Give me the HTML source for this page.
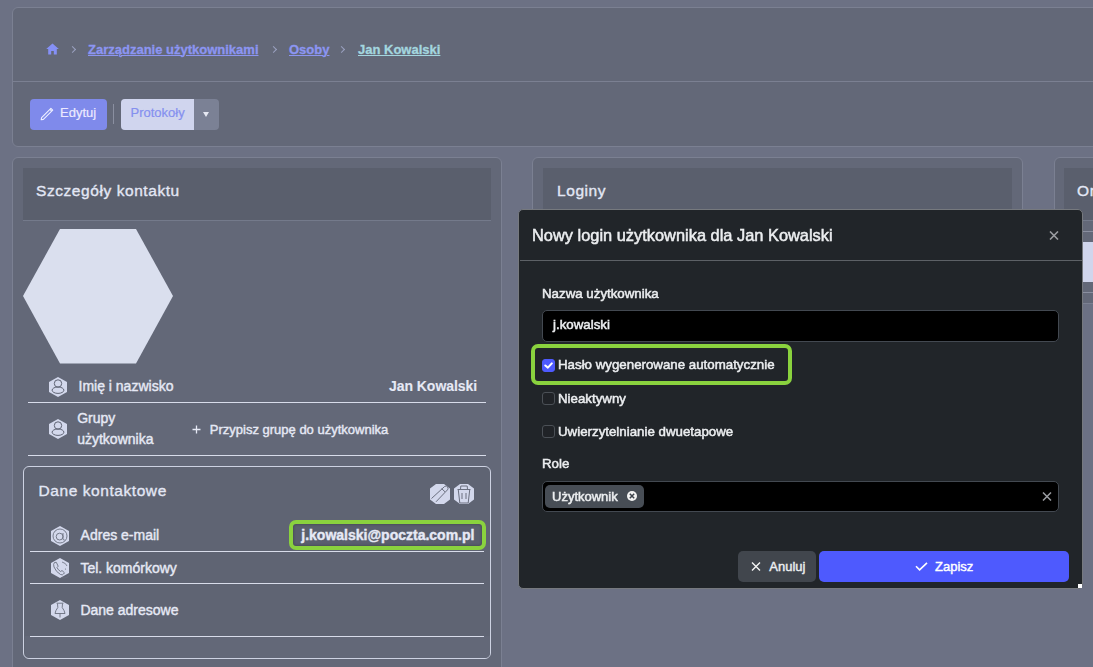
<!DOCTYPE html>
<html><head><meta charset="utf-8">
<style>
*{box-sizing:border-box;margin:0;padding:0}
html,body{width:1093px;height:667px;overflow:hidden}
body{background:#6c7184;font-family:"Liberation Sans",sans-serif;position:relative;color:#e3e6f2}
.a{position:absolute}
.t{position:absolute;white-space:nowrap;line-height:1;-webkit-text-stroke:0.4px currentColor}
.panel{position:absolute;background:#636878;border:1px solid #7b8092;border-radius:6px}
.hline{position:absolute;height:1px;background:#7b8092}
.crumb{color:#8c95f2;font-weight:700;font-size:13px;text-decoration:underline;text-underline-offset:1px;text-decoration-thickness:1px;-webkit-text-stroke:0.3px currentColor !important}
.chev{position:absolute;width:5px;height:5px;border-right:1.2px solid #9aa0c0;border-top:1.2px solid #9aa0c0;transform:rotate(45deg)}
.cardh{position:absolute;background:#5a5f6d;border-bottom:1px solid #747a8b}
.h16{font-size:15.5px;letter-spacing:0.57px;color:#e3e7f5;-webkit-text-stroke:0.35px currentColor !important}
.row{font-size:14px;color:#e6e9f5}
.dl{position:absolute;height:1px;background:#d8dcea}
.modal{position:absolute;left:518px;top:209px;width:565px;height:380px;background:#212529;border:1px solid #76797e;border-radius:5px}
.mt{color:#eceef0;will-change:transform;-webkit-text-stroke:0.5px currentColor}
.cb{position:absolute;width:13px;height:13px;border:1px solid #4b5056;border-radius:3px;background:#202327}
.green{position:absolute;border:4px solid #8ad23e;border-radius:7px}
</style></head>
<body>
<!-- top panel -->
<div class="panel" style="left:12px;top:7px;width:1100px;height:140px"></div>
<div class="hline" style="left:13px;top:81px;width:1080px"></div>
<!-- home icon -->
<svg class="a" style="left:46px;top:43px" width="13" height="12" viewBox="0 0 13 12"><path d="M6.5 0.5 L12.8 6 L10.8 6 L10.8 11.5 L7.8 11.5 L7.8 8 L5.2 8 L5.2 11.5 L2.2 11.5 L2.2 6 L0.2 6 Z" fill="#8590f5"/></svg>
<div class="chev" style="left:70px;top:47px"></div>
<div class="t crumb" style="left:88px;top:42.5px">Zarządzanie użytkownikami</div>
<div class="chev" style="left:271px;top:47px"></div>
<div class="t crumb" style="left:289px;top:42.5px">Osoby</div>
<div class="chev" style="left:339px;top:47px"></div>
<div class="t crumb" style="left:358px;top:42.5px;color:#a3d6df">Jan Kowalski</div>
<!-- buttons -->
<div class="a" style="left:30px;top:99px;width:77px;height:31px;background:#7f8aeb;border-radius:4px"></div>
<svg class="a" style="left:40px;top:107px" width="14" height="14" viewBox="0 0 14 14"><path d="M1.2 12.8 L1.6 10.6 L9.9 2.3 L11.7 4.1 L3.4 12.4 Z M9.9 2.3 L10.9 1.3 L12.7 3.1 L11.7 4.1" fill="none" stroke="#eef0ff" stroke-width="1.1" stroke-linejoin="round"/></svg>
<div class="t" style="left:60px;top:106.3px;font-size:13px;color:#ece9ff;-webkit-text-stroke:0.2px currentColor">Edytuj</div>
<div class="a" style="left:113px;top:104px;width:1px;height:20px;background:#8a8fa0"></div>
<div class="a" style="left:121px;top:99px;width:98px;height:31px;background:#7b8195;border-radius:4px"></div>
<div class="a" style="left:121px;top:99px;width:73px;height:31px;background:#d0d5ee;border-radius:4px 0 0 4px"></div>
<div class="t" style="left:130.5px;top:106.3px;font-size:13px;color:#8590ee;-webkit-text-stroke:0.2px currentColor">Protokoły</div>
<div class="a" style="left:202.5px;top:111.5px;width:0;height:0;border-left:3.5px solid transparent;border-right:3.5px solid transparent;border-top:5px solid #e6e8f2"></div>

<!-- card 1 -->
<div class="panel" style="left:12px;top:157px;width:490px;height:530px"></div>
<div class="cardh" style="left:23px;top:168px;width:468px;height:53px"></div>
<div class="t h16" style="left:36px;top:182.8px">Szczegóły kontaktu</div>
<svg class="a" style="left:0;top:0" width="200" height="400"><polygon points="23,296 60,229 136,229 173,296 136,363.5 60,363.5" fill="#dadfee"/></svg>


<!-- card1 rows -->
<svg class="a" style="left:49px;top:377px" width="18" height="20" viewBox="0 0 18 20"><polygon points="9,0 18,5 18,15 9,20 0,15 0,5" fill="#d3d8ec"/><circle cx="9" cy="6.5" r="3.7" fill="none" stroke="#5f6474" stroke-width="1"/><ellipse cx="9" cy="13.2" rx="5.9" ry="3.2" fill="none" stroke="#5f6474" stroke-width="1"/></svg>
<div class="t row" style="left:78.5px;top:379.3px">Imię i nazwisko</div>
<div class="t row" style="left:389px;top:379.3px;font-weight:700;-webkit-text-stroke:0.1px currentColor;letter-spacing:-0.05px">Jan Kowalski</div>
<div class="dl" style="left:28px;top:401.5px;width:458px"></div>
<svg class="a" style="left:48.5px;top:419px" width="18" height="20" viewBox="0 0 18 20"><polygon points="9,0 18,5 18,15 9,20 0,15 0,5" fill="#d3d8ec"/><circle cx="9" cy="6.5" r="3.7" fill="none" stroke="#5f6474" stroke-width="1"/><ellipse cx="9" cy="13.2" rx="5.9" ry="3.2" fill="none" stroke="#5f6474" stroke-width="1"/></svg>
<div class="t row" style="left:77.2px;top:410.9px">Grupy</div>
<div class="t row" style="left:77.2px;top:431.5px">użytkownika</div>
<svg class="a" style="left:192px;top:425px" width="9" height="9" viewBox="0 0 9 9"><path d="M0.5 4.5 L8.5 4.5 M4.5 0.5 L4.5 8.5" stroke="#e6e9f5" stroke-width="1.3"/></svg>
<div class="t" style="left:209.8px;top:423px;font-size:13px;color:#e6e9f5">Przypisz grupę do użytkownika</div>
<div class="dl" style="left:28px;top:454.5px;width:458px"></div>

<!-- inner card -->
<div class="a" style="left:23px;top:466px;width:468px;height:193px;border:1.5px solid #cdd2e2;border-radius:6px;background:#5f6473"></div>
<div class="t h16" style="left:38.5px;top:482.7px">Dane kontaktowe</div>
<svg class="a" style="left:430px;top:484px" width="45" height="20" viewBox="0 0 45 20">
<polygon points="6,0 14,0 20,4.5 20,15.5 14,20 6,20 0,15.5 0,4.5" fill="#d3d8ec"/>
<path d="M1.5 14.5 L14.6 2.5 Q16.3 1.2 17.6 2.8 Q18.6 4.4 17.5 5.8 L6 17.8 M11.6 4.6 L15 7.8" fill="none" stroke="#6a6f7f" stroke-width="1"/>
<polygon points="30,0 38,0 44,4.5 44,15.5 38,20 30,20 24,15.5 24,4.5" fill="#d3d8ec"/>
<path d="M27.5 5.5 L40.5 5.5 M30.5 5.5 L30.8 2 L37.2 2 L37.5 5.5 M28.3 6 L29.8 19 L38.2 19 L39.7 6 M32 9 L32 15 M36 9 L36 15" fill="none" stroke="#6a6f7f" stroke-width="1"/>
</svg>
<svg class="a" style="left:51px;top:526px" width="18" height="20" viewBox="0 0 18 20"><polygon points="9,0 18,5 18,15 9,20 0,15 0,5" fill="#d3d8ec"/><circle cx="9" cy="10" r="7" fill="none" stroke="#6a6f7f" stroke-width="0.9"/><circle cx="8.6" cy="10.6" r="3.4" fill="none" stroke="#6a6f7f" stroke-width="0.9"/><path d="M12 7 L12 12.6 Q12 14.2 13.6 14" fill="none" stroke="#6a6f7f" stroke-width="0.9"/></svg>
<div class="t row" style="left:80.6px;top:528.4px">Adres e-mail</div>
<div class="green" style="left:289px;top:519.5px;width:197px;height:30px;background:#5a5f6e;box-shadow:inset 0 0 3px rgba(0,0,0,.35)"></div>
<div class="t row" style="left:301.3px;top:528.2px;font-weight:700">j.kowalski@poczta.com.pl</div>
<div class="dl" style="left:30px;top:550.5px;width:454px"></div>
<svg class="a" style="left:51px;top:558px" width="20" height="22" viewBox="0 0 20 22"><polygon points="9,0 18,5 18,15 9,20 0,15 0,5" fill="#d3d8ec"/><path d="M3.5 4.5 Q2 6 3 9 Q5 14 9.5 16.5 Q11.5 17.5 12.5 16 L13.5 14.8 L11 12.5 L9.6 13.5 Q7 12 6 9.5 L7.2 8.2 L5.3 4.3 Z" fill="none" stroke="#6a6f7f" stroke-width="0.9"/><path d="M11 4 Q15 5 16 8 M10.5 19.5 Q16 21 18.5 17" fill="none" stroke="#6a6f7f" stroke-width="0.8"/><circle cx="14.5" cy="11" r="0.6" fill="#6a6f7f"/></svg>
<div class="t row" style="left:80.4px;top:560.5px">Tel. komórkowy</div>
<div class="dl" style="left:30px;top:582.5px;width:454px"></div>
<svg class="a" style="left:51px;top:600px" width="18" height="20" viewBox="0 0 18 20"><polygon points="9,0 18,5 18,15 9,20 0,15 0,5" fill="#d3d8ec"/><path d="M5.5 3.2 L12.5 3.2 M6.5 3.5 L6.8 7.5 Q4.5 10.5 4 13.5 L14 13.5 Q13.5 10.5 11.2 7.5 L11.5 3.5 M9 13.5 L9 17.5" fill="none" stroke="#6a6f7f" stroke-width="0.9"/></svg>
<div class="t row" style="left:80.4px;top:603.2px">Dane adresowe</div>
<div class="a" style="left:24.5px;top:636px;width:465px;height:21.5px;background:#636878;border-radius:0 0 5px 5px"></div>
<div class="dl" style="left:30px;top:636px;width:454px"></div>

<!-- card 2 -->
<div class="panel" style="left:532px;top:157px;width:491px;height:147px"></div>
<div class="cardh" style="left:543px;top:168px;width:469px;height:53px"></div>
<div class="t h16" style="left:557px;top:182.8px">Loginy</div>
<!-- card 3 -->
<div class="panel" style="left:1054px;top:157px;width:490px;height:147px"></div>
<div class="a" style="left:1064px;top:231px;width:40px;height:1px;background:#8a8fa0"></div>
<div class="a" style="left:1064px;top:242px;width:40px;height:40px;background:#d0d5ec"></div>
<div class="a" style="left:1064px;top:292px;width:40px;height:1px;background:#8a8fa0"></div>
<div class="cardh" style="left:1064px;top:168px;width:469px;height:53px"></div>
<div class="t h16" style="left:1077px;top:182.8px">Organizacje</div>

<!-- modal -->
<div class="modal"></div>
<!-- modal content -->
<div class="t mt" style="left:532px;top:227.2px;font-size:16.4px">Nowy login użytkownika dla Jan Kowalski</div>
<svg class="a" style="left:1049px;top:231px" width="10" height="9" viewBox="0 0 10 9"><path d="M1 0.5 L9 8.5 M9 0.5 L1 8.5" stroke="#9a9ca1" stroke-width="1.6"/></svg>
<div class="a" style="left:520px;top:260px;width:562px;height:1px;background:#5d6166"></div>
<div class="t mt" style="left:542px;top:286.5px;font-size:13.3px">Nazwa użytkownika</div>
<div class="a" style="left:542px;top:310px;width:517px;height:32px;background:#000;border:1px solid #434951;border-radius:5px"></div>
<div class="t mt" style="left:552.6px;top:318.4px;font-size:13.3px">j.kowalski</div>
<div class="green" style="left:531px;top:344px;width:261px;height:41px"></div>
<div class="cb" style="left:542px;top:359px;background:#4e5afe;border-color:#4e5afe"></div>
<svg class="a" style="left:544px;top:361px" width="9" height="9" viewBox="0 0 9 9"><path d="M1.3 4.5 L3.9 6.6 L7.8 2.4" fill="none" stroke="#fff" stroke-width="2" stroke-linecap="round" stroke-linejoin="round"/></svg>
<div class="t mt" style="left:557.6px;top:357.7px;font-size:13.3px">Hasło wygenerowane automatycznie</div>
<div class="cb" style="left:542px;top:392px"></div>
<div class="t mt" style="left:557.6px;top:391.7px;font-size:13.3px">Nieaktywny</div>
<div class="cb" style="left:542px;top:425px"></div>
<div class="t mt" style="left:557.6px;top:424.9px;font-size:13.3px">Uwierzytelnianie dwuetapowe</div>
<div class="t mt" style="left:542px;top:457.2px;font-size:13.3px">Role</div>
<div class="a" style="left:542px;top:481px;width:517px;height:31px;background:#000;border:1px solid #434951;border-radius:5px"></div>
<div class="a" style="left:545px;top:485px;width:99px;height:23px;background:#474d55;border-radius:5px"></div>
<div class="t mt" style="left:551.6px;top:490px;font-size:13px">Użytkownik</div>
<svg class="a" style="left:626px;top:490px" width="12" height="12" viewBox="0 0 12 12"><circle cx="6" cy="6" r="5" fill="#f4f4f4"/><path d="M3.8 3.8 L8.2 8.2 M8.2 3.8 L3.8 8.2" stroke="#3d434b" stroke-width="1.5"/></svg>
<svg class="a" style="left:1042px;top:492px" width="10" height="9" viewBox="0 0 10 9"><path d="M1 0.5 L9 8.5 M9 0.5 L1 8.5" stroke="#9a9ca1" stroke-width="1.5"/></svg>
<div class="a" style="left:738px;top:551px;width:78px;height:31px;background:#41464d;border-radius:5px"></div>
<svg class="a" style="left:751px;top:562px" width="10" height="9" viewBox="0 0 10 9"><path d="M1 0.5 L9 8.5 M9 0.5 L1 8.5" stroke="#f4f4f4" stroke-width="1.4"/></svg>
<div class="t" style="left:769.3px;top:560px;font-size:13px;color:#eceef0">Anuluj</div>
<div class="a" style="left:819px;top:551px;width:250px;height:31px;background:#4e5afe;border-radius:5px"></div>
<svg class="a" style="left:915px;top:562px" width="13" height="9" viewBox="0 0 13 9"><path d="M1 4.3 L4.6 7.8 L12 0.8" fill="none" stroke="#fff" stroke-width="1.6"/></svg>
<div class="t" style="left:935px;top:560px;font-size:13px;color:#fff">Zapisz</div>
<div class="a" style="left:1078px;top:584px;width:3.5px;height:3.5px;background:#fff"></div>

</body></html>
